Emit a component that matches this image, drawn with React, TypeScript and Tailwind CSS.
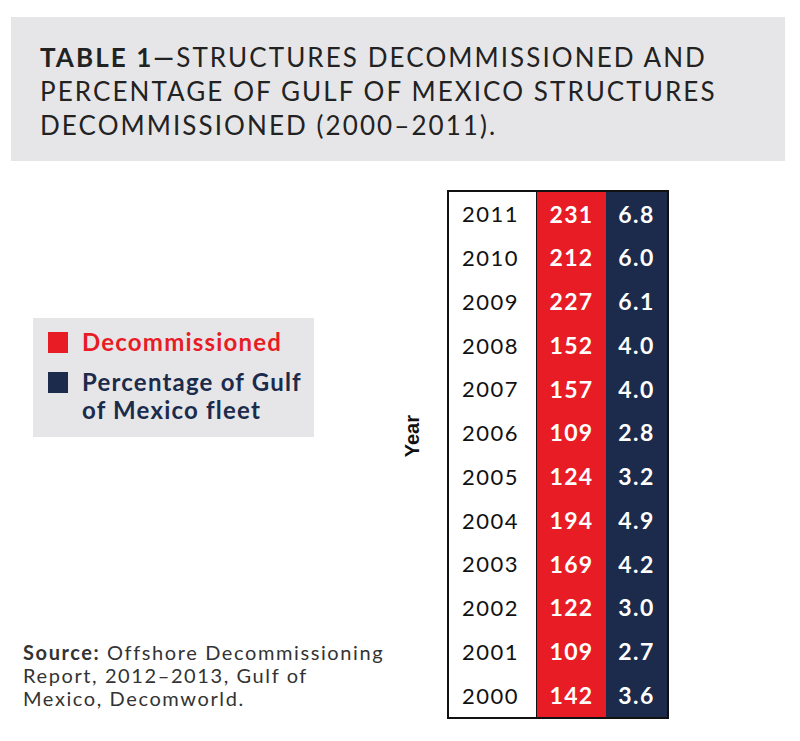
import React from 'react';

const rows = [
  { year: 2011, count: 231, pct: '6.8' },
  { year: 2010, count: 212, pct: '6.0' },
  { year: 2009, count: 227, pct: '6.1' },
  { year: 2008, count: 152, pct: '4.0' },
  { year: 2007, count: 157, pct: '4.0' },
  { year: 2006, count: 109, pct: '2.8' },
  { year: 2005, count: 124, pct: '3.2' },
  { year: 2004, count: 194, pct: '4.9' },
  { year: 2003, count: 169, pct: '4.2' },
  { year: 2002, count: 122, pct: '3.0' },
  { year: 2001, count: 109, pct: '2.7' },
  { year: 2000, count: 142, pct: '3.6' },
];

export default function App() {
  return (
    <div className="w-[800px] h-[741px] bg-white font-['Lato',sans-serif] text-[#1a1a1a]">
      {/* Title */}
      <div className="mx-[11px] mt-[17px] h-[144px] w-[774px] bg-[#e6e6e8] pl-[29px] pt-[23px]">
        <p className="text-[26px] leading-[34px] uppercase tracking-[0.08em] text-[#222] whitespace-nowrap">
          <span className="font-bold">Table 1—</span>Structures decommissioned and
          <br />
          Percentage of Gulf of Mexico structures
          <br />
          Decommissioned (2000–2011).
        </p>
      </div>

      <div className="flex">
        {/* Left column: legend + source */}
        <div className="w-[390px] flex flex-col">
          <div className="ml-[33px] mt-[157px] w-[281px] h-[119px] bg-[#e6e6e8] pl-[15px] pt-[13px]">
            <div className="flex items-center gap-[14px] h-[22px]">
              <span className="w-[20px] h-[21px] bg-[#e81c24] shrink-0" />
              <span className="text-[24px] font-bold tracking-[0.05em] text-[#e81c24] leading-[28px] whitespace-nowrap">Decommissioned</span>
            </div>
            <div className="flex items-start gap-[14px] mt-[17px]">
              <span className="w-[20px] h-[21px] bg-[#1c2b4b] shrink-0 mt-[2px]" />
              <span className="text-[24px] font-bold tracking-[0.05em] text-[#1c2b4b] leading-[28px] -mt-[2px] whitespace-nowrap">
                Percentage of Gulf
                <br />
                of Mexico fleet
              </span>
            </div>
          </div>
          <p className="ml-[23px] mt-[204px] text-[20px] leading-[23px] tracking-[0.08em] text-[#333] whitespace-nowrap">
            <span className="font-bold">Source:</span> Offshore Decommissioning
            <br />
            Report, 2012–2013, Gulf of
            <br />
            Mexico, Decomworld.
          </p>
        </div>

        {/* Axis label */}
        <div className="w-[57px] flex items-start pl-[12px] pt-[254px]">
          <span className="[writing-mode:vertical-rl] rotate-180 font-['Liberation_Sans',sans-serif] font-bold text-[20px] leading-[20px] text-[#111]">
            Year
          </span>
        </div>

        {/* Table */}
        <div className="mt-[29px] w-[222px] border-2 border-[#111] flex">
          <div className="w-[88px] border-r border-[#111] bg-white">
            {rows.map(r => (
              <div key={r.year} className="h-[43.75px] flex items-center justify-center pr-[4px] text-[22px] tracking-[0.07em] text-[#111]">
                {r.year}
              </div>
            ))}
          </div>
          <div className="w-[69px] bg-[#e81c24]">
            {rows.map(r => (
              <div key={r.year} className="h-[43.75px] flex items-center justify-center text-[23px] font-bold tracking-[0.06em] text-white">
                {r.count}
              </div>
            ))}
          </div>
          <div className="flex-1 bg-[#1c2b4b]">
            {rows.map(r => (
              <div key={r.year} className="h-[43.75px] flex items-center justify-center text-[23px] font-bold tracking-[0.06em] text-white">
                {r.pct}
              </div>
            ))}
          </div>
        </div>
      </div>
    </div>
  );
}
